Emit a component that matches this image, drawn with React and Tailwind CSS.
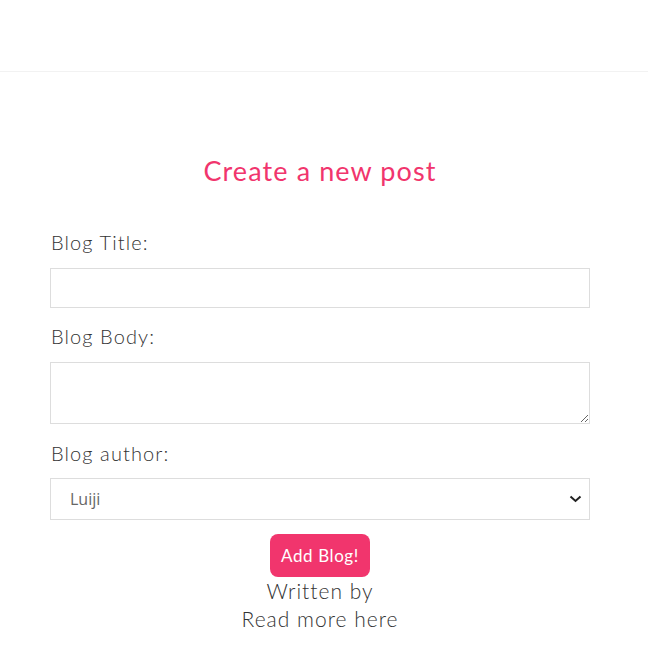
import React, { useState } from 'react';

const App = () => {
  const [title, setTitle] = useState('');
  const [body, setBody] = useState('');
  const [author, setAuthor] = useState('luiji');

  return (
    <div className="min-h-screen bg-white text-[#333] font-['Lato',sans-serif]">
      {/* Navbar */}
      <nav className="h-[72px] border-b border-[#f2f2f2]"></nav>

      {/* Create form */}
      <div className="w-[640px]">
        <div className="w-[540px] mx-auto text-center">
          <h2 className="mt-[83px] text-[27px] leading-[32px] tracking-[1.1px] text-[#f1356d]">Create a new post</h2>
          <form className="mt-[43px] text-left" onSubmit={e => e.preventDefault()}>
            <label className="block pl-px text-[20px] leading-[24px] font-light tracking-[1.1px]">Blog Title:</label>
            <input
              type="text"
              value={title}
              onChange={e => setTitle(e.target.value)}
              className="block w-full h-[40px] mt-[14px] px-[10px] border border-[#ddd] outline-none"
            />
            <label className="block mt-[16px] pl-px text-[20px] leading-[24px] font-light tracking-[1.1px]">Blog Body:</label>
            <textarea
              value={body}
              onChange={e => setBody(e.target.value)}
              className="block w-full h-[62px] mt-[14px] px-[10px] py-[6px] border border-[#ddd] outline-none"
            ></textarea>
            <label className="block mt-[17px] pl-px text-[20px] leading-[24px] font-light tracking-[1.1px]">Blog author:</label>
            <div className="relative mt-[13px]">
              <select
                value={author}
                onChange={e => setAuthor(e.target.value)}
                className="block w-full h-[42px] pl-[19px] pr-[30px] border border-[#ddd] bg-white text-[16px] text-[#666] font-['Open_Sans',sans-serif] outline-none appearance-none"
              >
                <option value="luiji">Luiji</option>
                <option value="mario">Mario</option>
              </select>
              <svg className="absolute right-[8px] top-[17px] pointer-events-none" width="13" height="8" viewBox="0 0 13 8">
                <path d="M1.5 1.5 L6.5 6 L11.5 1.5" fill="none" stroke="#222" strokeWidth="2" />
              </svg>
            </div>
            <div className="text-center">
              <button className="mt-[14px] w-[100px] h-[43px] rounded-[8px] bg-[#f1356d] text-white text-[17px] tracking-[0.6px]">Add Blog!</button>
              <p className="text-[21px] leading-[28px] font-light tracking-[1px]">Written by</p>
              <p className="text-[21px] leading-[28px] font-light tracking-[1px]">Read more here</p>
            </div>
          </form>
        </div>
      </div>
    </div>
  );
};

export default App;
